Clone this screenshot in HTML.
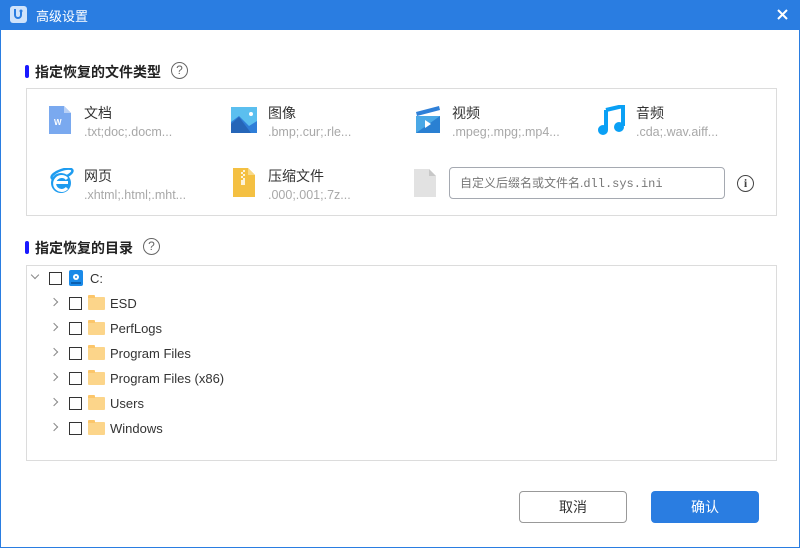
<!DOCTYPE html><html><head><meta charset="utf-8"><style>
*{margin:0;padding:0;box-sizing:border-box}
body{width:800px;height:548px;background:#fff;font-family:"Liberation Sans","Noto Sans CJK SC",sans-serif;position:relative;overflow:hidden;font-size:13px;color:#333}
.win{position:absolute;left:0;top:0;width:800px;height:548px;border:1px solid #2a7de1}
.tb{position:absolute;left:0;top:0;width:800px;height:30px;background:#2a7de1;color:#fff}
.a{position:absolute;white-space:nowrap}
.h{font-size:14px;font-weight:bold;color:#222}
.bar{width:4px;height:13px;background:#1a1aff;border-radius:2px}
.q{width:17px;height:17px;border:1.3px solid #666;border-radius:50%;font-size:12px;color:#666;text-align:center;line-height:15px}
.box{border:1px solid #dcdcdc}
.t{font-size:14px;color:#333}
.s{font-size:12.5px;color:#a8a8a8}
.cb{width:13px;height:13px;border:1px solid #333;background:#fff}
.chev{width:6px;height:6px;border-right:1.5px solid #888;border-bottom:1.5px solid #888;transform:rotate(-45deg)}
.fo{width:17px;height:13px;background:#fcd58a;border-radius:1px}
.fo:before{content:"";position:absolute;left:0;top:-2px;width:7px;height:3px;background:#fcc66a;border-radius:1px 1px 0 0}
.fn{font-size:13px;color:#333}
.btn{width:108px;height:32px;border-radius:4px;text-align:center;line-height:30px;font-size:14px}
</style></head><body>
<div class="win"></div>
<div class="tb">
<div class="a" style="left:10px;top:6px;width:17px;height:17px;background:#cfe3fb;border-radius:3px"><svg width="17" height="17" viewBox="0 0 17 17"><path d="M5 3v6a3 3 0 0 0 6 0V6" fill="none" stroke="#2a7de1" stroke-width="2"/><circle cx="11" cy="5" r="1.5" fill="#2a7de1"/></svg></div>
<div class="a" style="left:36px;top:6px;font-size:13px">高级设置</div>
<svg class="a" style="left:776px;top:8px" width="13" height="13"><path d="M2 2L11 11M11 2L2 11" stroke="#fff" stroke-width="2"/></svg>
</div>
<div class="a bar" style="left:25px;top:65px"></div>
<div class="a h" style="left:35px;top:62px">指定恢复的文件类型</div>
<div class="a q" style="left:171px;top:62px">?</div>
<div class="a box" style="left:26px;top:88px;width:751px;height:128px"></div>
<svg class="a" style="left:49px;top:106px" width="22" height="28"><path d="M0 0h15l7 7v21H0z" fill="#7aa9ef"/><path d="M15 0v7h7z" fill="#b9d1f6"/><text x="5" y="19" font-size="8" fill="#fff" font-weight="bold" font-family="Liberation Sans">W</text></svg>
<div class="a t" style="left:84px;top:103px">文档</div><div class="a s" style="left:84px;top:125px">.txt;doc;.docm...</div>
<svg class="a" style="left:231px;top:107px" width="26" height="26"><rect width="26" height="26" fill="#5bbfef"/><path d="M0 26V15l8-6 10 10 8-5v12z" fill="#2f7ed8"/><path d="M0 26V17l8-7 12 16z" fill="#2666b8"/><circle cx="20" cy="7" r="2" fill="#fff"/></svg>
<div class="a t" style="left:268px;top:103px">图像</div><div class="a s" style="left:268px;top:125px">.bmp;.cur;.rle...</div>
<svg class="a" style="left:415px;top:106px" width="26" height="28"><path d="M1 6L24 0l1 4L2 10z" fill="#2f80d8"/><rect x="1" y="10" width="24" height="17" fill="#4aa8e6"/><path d="M1 27L25 10v17z" fill="#2a80d2"/><path d="M10 14v8l6-4z" fill="#fff"/></svg>
<div class="a t" style="left:452px;top:103px">视频</div><div class="a s" style="left:452px;top:125px">.mpeg;.mpg;.mp4...</div>
<svg class="a" style="left:597px;top:105px" width="28" height="30"><path d="M9 5L26 1v20" fill="none" stroke="#0aa0f5" stroke-width="4"/><path d="M9 5v20" stroke="#0aa0f5" stroke-width="4"/><circle cx="6" cy="25" r="5" fill="#0aa0f5"/><circle cx="22" cy="22" r="5" fill="#0aa0f5"/></svg>
<div class="a t" style="left:636px;top:103px">音频</div><div class="a s" style="left:636px;top:125px">.cda;.wav.aiff...</div>
<svg class="a" style="left:48px;top:168px" width="26" height="26"><ellipse cx="14" cy="6" rx="11" ry="4" fill="none" stroke="#1e9cf0" stroke-width="2.5" transform="rotate(-20 14 6)"/><circle cx="13" cy="15" r="10" fill="#1e9cf0"/><rect x="6" y="13" width="14" height="3" fill="#fff"/><path d="M19 20a7 7 0 1 1 0-9" fill="none" stroke="#fff" stroke-width="3"/></svg>
<div class="a t" style="left:84px;top:166px">网页</div><div class="a s" style="left:84px;top:188px">.xhtml;.html;.mht...</div>
<svg class="a" style="left:233px;top:168px" width="22" height="29"><path d="M0 0h15l7 7v22H0z" fill="#f4c042"/><path d="M15 0v7h7z" fill="#f8d987"/><path d="M10 2h2v2h-2zM8 4h2v2H8zM10 6h2v2h-2zM8 8h2v2H8zM10 10h2v2h-2zM8 12h4v5H8z" fill="#fff" opacity=".8"/></svg>
<div class="a t" style="left:268px;top:166px">压缩文件</div><div class="a s" style="left:268px;top:188px">.000;.001;.7z...</div>
<svg class="a" style="left:414px;top:169px" width="22" height="28"><path d="M0 0h15l7 7v21H0z" fill="#e2e2e2"/><path d="M15 0v7h7z" fill="#c8c8c8"/></svg>
<div class="a" style="left:449px;top:167px;width:276px;height:32px;border:1px solid #a5a9b1;border-radius:4px;padding-left:10px;line-height:30px;font-size:12px;color:#777">自定义后缀名或文件名.<span style="font-family:'Liberation Mono',monospace">dll.sys.ini</span></div>
<div class="a q" style="left:737px;top:175px;border-color:#444;color:#444;font-family:'Liberation Serif',serif;font-weight:bold">i</div>
<div class="a bar" style="left:25px;top:241px"></div>
<div class="a h" style="left:35px;top:238px">指定恢复的目录</div>
<div class="a q" style="left:143px;top:238px">?</div>
<div class="a box" style="left:26px;top:265px;width:751px;height:196px"></div>
<div class="a chev" style="left:32px;top:272px;transform:rotate(45deg)"></div>
<div class="a cb" style="left:49px;top:272px"></div>
<svg class="a" style="left:69px;top:270px" width="14" height="16"><rect width="14" height="16" rx="2" fill="#1a8ae8"/><circle cx="7" cy="7" r="3" fill="#fff"/><circle cx="7" cy="7" r="1" fill="#1a8ae8"/><rect x="2" y="12" width="10" height="2" fill="#0a5fb0"/></svg>
<div class="a fn" style="left:90px;top:271px">C:</div>
<div class="a chev" style="left:51px;top:299px"></div><div class="a cb" style="left:69px;top:297px"></div><div class="a fo" style="left:88px;top:297px"></div><div class="a fn" style="left:110px;top:296px">ESD</div>
<div class="a chev" style="left:51px;top:324px"></div><div class="a cb" style="left:69px;top:322px"></div><div class="a fo" style="left:88px;top:322px"></div><div class="a fn" style="left:110px;top:321px">PerfLogs</div>
<div class="a chev" style="left:51px;top:349px"></div><div class="a cb" style="left:69px;top:347px"></div><div class="a fo" style="left:88px;top:347px"></div><div class="a fn" style="left:110px;top:346px">Program Files</div>
<div class="a chev" style="left:51px;top:374px"></div><div class="a cb" style="left:69px;top:372px"></div><div class="a fo" style="left:88px;top:372px"></div><div class="a fn" style="left:110px;top:371px">Program Files (x86)</div>
<div class="a chev" style="left:51px;top:399px"></div><div class="a cb" style="left:69px;top:397px"></div><div class="a fo" style="left:88px;top:397px"></div><div class="a fn" style="left:110px;top:396px">Users</div>
<div class="a chev" style="left:51px;top:424px"></div><div class="a cb" style="left:69px;top:422px"></div><div class="a fo" style="left:88px;top:422px"></div><div class="a fn" style="left:110px;top:421px">Windows</div>
<div class="a btn" style="left:519px;top:491px;border:1px solid #999;color:#333">取消</div>
<div class="a btn" style="left:651px;top:491px;background:#2a7de1;color:#fff;line-height:32px">确认</div>
</body></html>
